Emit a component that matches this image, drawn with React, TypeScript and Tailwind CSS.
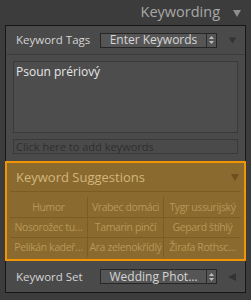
import React from "react";

const Down = ({ color, w = 8, h = 7 }: { color: string; w?: number; h?: number }) => (
  <svg width={w} height={h} viewBox="0 0 8 7">
    <polygon points="0,0 8,0 4,7" fill={color} />
  </svg>
);

const Stepper = () => (
  <div className="flex h-full w-[10px] flex-col items-center justify-center gap-[2px] border-l border-[#2a2a2a]">
    <svg width="5" height="3" viewBox="0 0 5 3">
      <polygon points="0,3 5,3 2.5,0" fill="#bdbdbd" />
    </svg>
    <svg width="5" height="3" viewBox="0 0 5 3">
      <polygon points="0,0 5,0 2.5,3" fill="#bdbdbd" />
    </svg>
  </div>
);

const Dropdown = ({ label }: { label: string }) => (
  <div className="flex h-[15px] w-[117px] items-center border border-[#262626] bg-[#555555]">
    <div className="flex-1 whitespace-nowrap text-center text-[12px] leading-none text-[#d6d6d6]">
      {label}
    </div>
    <Stepper />
  </div>
);

const cells = [
  ["Humor", "Vrabec domáci", "Tygr ussurijský"],
  ["Nosorožec tu…", "Tamarin pinčí", "Gepard štíhlý"],
  ["Pelikán kadeř…", "Ara zelenokřídlý", "Žirafa Rothsc…"],
];

export default function App() {
  return (
    <div
      className="h-[300px] w-[251px] overflow-hidden bg-[#3c3c3c]"
      style={{ fontFamily: '"Open Sans", "DejaVu Sans", sans-serif' }}
    >
      <div className="flex h-[25px] items-center justify-end pr-[10px]">
        <span className="text-[14.5px] leading-none text-[#a8a8a8]">Keywording</span>
        <span className="ml-[13px] mt-[2px]">
          <Down color="#8e8e8e" />
        </span>
      </div>
      <div className="mx-[5px] border border-[#171717] bg-[#4a4a4a]">
        <div className="flex h-[29px] items-center border-b border-[#3d3d3d] pl-[10px]">
          <span className="w-[84px] text-[11.5px] leading-none text-[#d4d4d4]">Keyword Tags</span>
          <Dropdown label="Enter Keywords" />
          <span className="ml-[12px]">
            <Down color="#333333" w={7} h={7} />
          </span>
        </div>
        <div className="px-[7px] pt-[6px] pb-[7px]">
          <div className="h-[72px] border border-[#3a3a3a] bg-[#4d4d4d] px-[2px] pt-[1px] text-[12px] text-[#e6e6e6]">
            Psoun prériový
          </div>
          <div className="mt-[6px] flex h-[15px] items-center border border-[#3a3a3a] bg-[#4a4a4a] px-[2px] text-[11px] leading-none text-[#2f2f2f]">
            Click here to add keywords
          </div>
        </div>
        <div className="-mx-px h-[100px] border-2 border-[#f29500] bg-[#8a6a2e]">
          <div className="flex h-[28px] items-center justify-between pl-[9px] pr-[5px]">
            <span className="text-[13px] leading-none text-[#d2b67e]">Keyword Suggestions</span>
            <Down color="#6c5020" />
          </div>
          <div className="mx-[3px] border-t border-[#7a5c24]">
            {cells.map((row, i) => (
              <div
                key={i}
                className={`grid grid-cols-[78px_76px_1fr] ${i === 0 ? "h-[25px] pt-[5px]" : "h-[20px] border-t border-[#7a5c24]"}`}
              >
                {row.map((c, j) => (
                  <div
                    key={j}
                    className={`flex items-center justify-center whitespace-nowrap text-[10.5px] leading-none tracking-[-0.4px] text-[#b8975a] ${j < 2 ? "border-r border-[#7a5c24]" : ""}`}
                  >
                    {c}
                  </div>
                ))}
              </div>
            ))}
          </div>
        </div>
        <div className="flex h-[31px] items-center pl-[10px]">
          <span className="w-[84px] text-[11.5px] leading-none text-[#d4d4d4]">Keyword Set</span>
          <Dropdown label="Wedding Phot…" />
          <span className="ml-[11px]">
            <svg width="8" height="8" viewBox="0 0 8 8">
              <polygon points="8,0 8,8 0,4" fill="#333333" />
            </svg>
          </span>
        </div>
      </div>
    </div>
  );
}
